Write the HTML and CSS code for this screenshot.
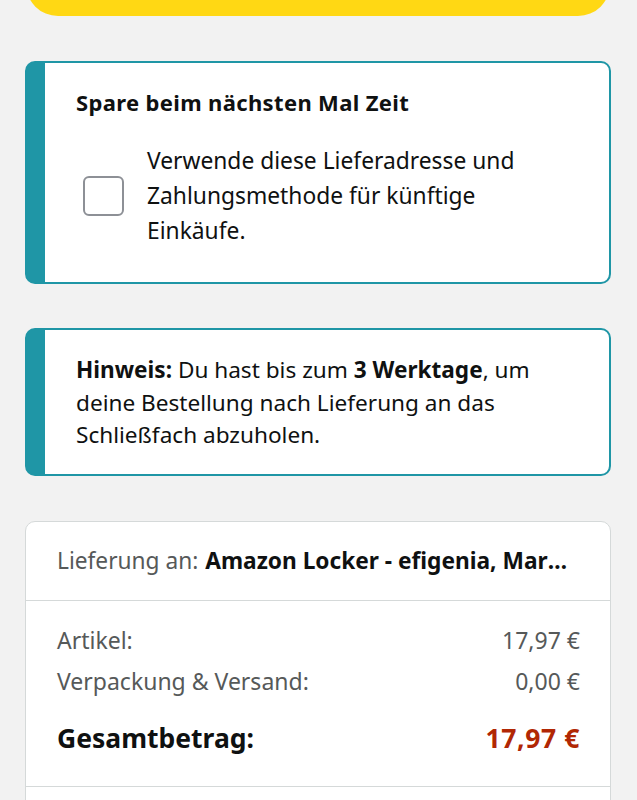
FILE: index.html
```html
<!DOCTYPE html>
<html lang="de">
<head>
<meta charset="utf-8">
<link rel="stylesheet" href="styles.css">
</head>
<body>
<div class="page">
  <div class="buy-btn"></div>

  <div class="alert">
    <div class="alert-body">
      <div class="alert-title">Spare beim nächsten Mal Zeit</div>
      <label class="check-row">
        <span class="checkbox"></span>
        <span class="check-text">Verwende diese Lieferadresse und Zahlungsmethode für künftige Einkäufe.</span>
      </label>
    </div>
  </div>

  <div class="alert">
    <div class="alert-body note">
      <b>Hinweis:</b> Du hast bis zum <b>3 Werktage</b>, um deine Bestellung nach Lieferung an das Schließfach abzuholen.
    </div>
  </div>

  <div class="summary">
    <div class="ship-row"><span class="muted">Lieferung an:</span><b>Amazon Locker - efigenia, Marktplatz 1, 12345 Berlin</b></div>
    <div class="totals">
      <div class="line"><span>Artikel:</span><span>17,97 €</span></div>
      <div class="line"><span>Verpackung &amp; Versand:</span><span>0,00 €</span></div>
      <div class="line grand"><span>Gesamtbetrag:</span><span class="price">17,97 €</span></div>
    </div>
    <div class="foot"></div>
  </div>
</div>
</body>
</html>
```

FILE: styles.css
```css
* { box-sizing: border-box; }
html, body { margin: 0; padding: 0; }
body {
  background: #f2f2f2;
  font-family: "Noto Sans", "Open Sans", sans-serif;
  color: #0f1111;
  width: 637px;
  height: 800px;
  overflow: hidden;
}
.page {
  padding: 0 26px 0 25px;
  margin-top: -40px;
  display: flex;
  flex-direction: column;
}
.buy-btn {
  height: 56px;
  background: #ffd814;
  border-radius: 0 0 32px 32px;
  margin: 0 1px 0 1px;
}
.alert {
  margin-top: 45px;
  border: 2.5px solid #1f96a6;
  border-left: 20px solid #1f96a6;
  border-radius: 10px;
  background: #fff;
}
.alert + .alert { margin-top: 44px; }
.alert-body {
  padding: 24px 20px 34px 31px;
}
.alert-title {
  font-weight: 700;
  font-size: 22px;
  letter-spacing: 0.35px;
  line-height: 30px;
}
.check-row {
  display: flex;
  align-items: center;
  margin-top: 26px;
}
.checkbox {
  flex: none;
  width: 41px;
  height: 40px;
  border: 2px solid #8d9096;
  border-radius: 6px;
  margin-left: 7px;
  margin-right: 23px;
}
.check-text {
  font-size: 22.8px;
  line-height: 35px;
  max-width: 400px;
}
.note {
  font-size: 22.6px;
  line-height: 32.5px;
  padding: 24px 50px 22px 31px;
}
.summary {
  margin-top: 45px;
  background: #fff;
  border: 1.5px solid #d5d9d9;
  border-radius: 10px;
  height: 320px;
}
.ship-row {
  font-size: 22.7px;
  height: 79px;
  padding: 0 40px 0 31px;
  display: flex;
  align-items: center;
  border-bottom: 1.5px solid #d5d9d9;
  white-space: nowrap;
  overflow: hidden;
}
.ship-row b {
  overflow: hidden;
  text-overflow: ellipsis;
  margin-left: 7px;
}
.muted { color: #565959; }
.totals {
  padding: 19px 30px 27px 31px;
  border-bottom: 1.5px solid #d5d9d9;
}
.line {
  display: flex;
  justify-content: space-between;
  font-size: 23px;
  line-height: 41px;
  color: #565959;
}
.line.grand {
  margin-top: 16px;
  font-size: 26.5px;
  font-weight: 700;
  color: #0f1111;
}
.price { color: #b12704; letter-spacing: 0.6px; }
```
